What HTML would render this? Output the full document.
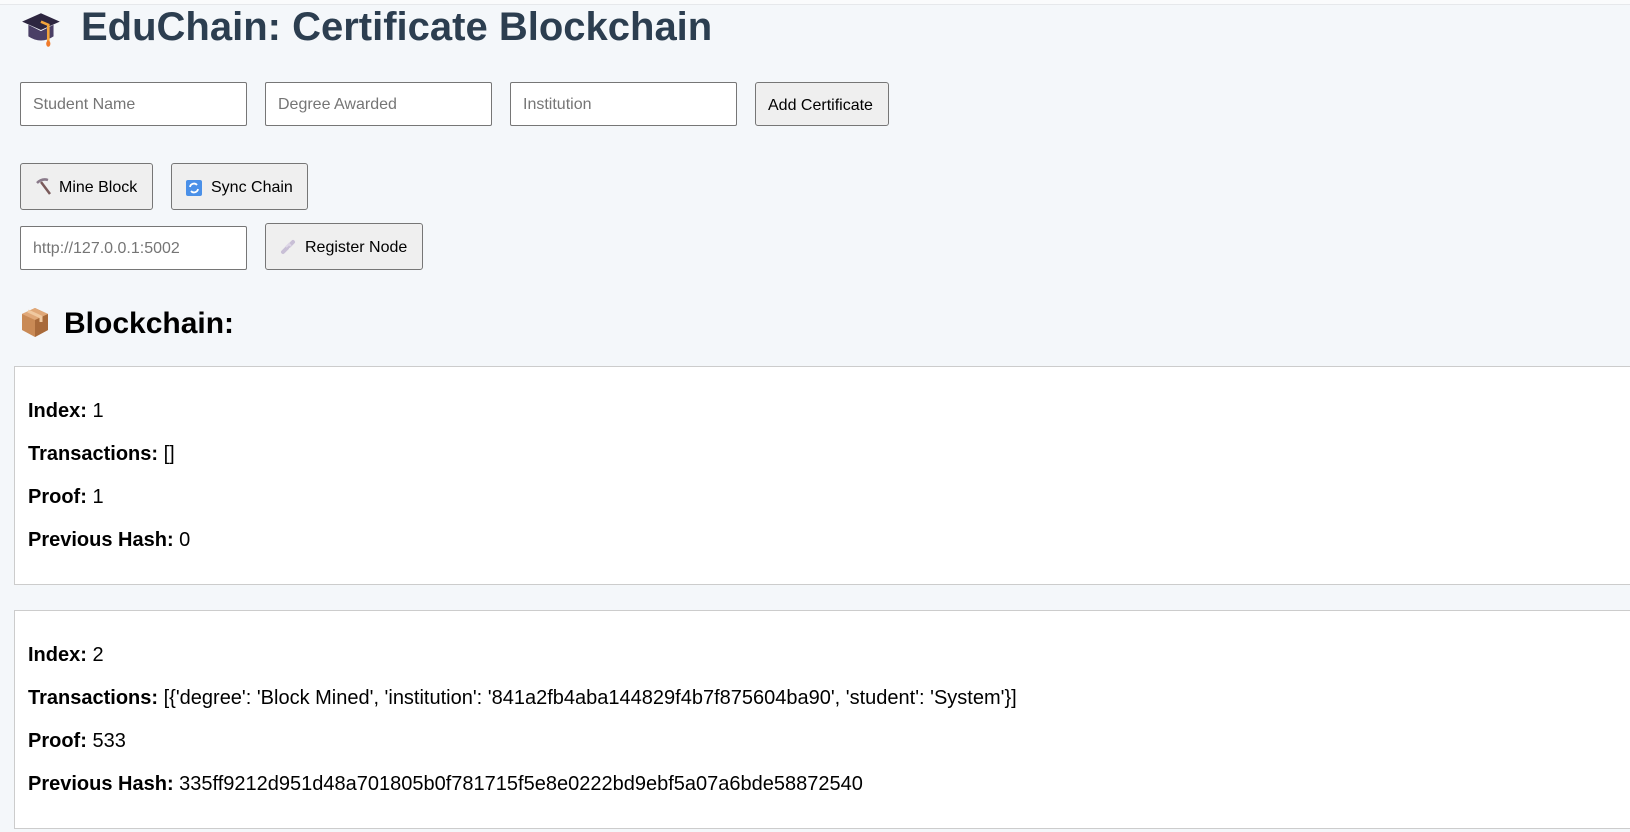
<!DOCTYPE html>
<html><head><meta charset="utf-8"><style>
*{box-sizing:border-box;margin:0;padding:0}
body{width:1630px;height:832px;overflow:hidden;background:#f4f7fa;font-family:"Liberation Sans",Arial,sans-serif;position:relative;color:#000}
.topline{position:absolute;left:0;top:0;width:1630px;height:5px;background:#fafbfc;border-bottom:1px solid #e6e8eb}
.abs{position:absolute}
h1{position:absolute;left:81px;top:4px;font-size:40px;font-weight:bold;color:#2c3e50;white-space:nowrap;line-height:46px}
.inp{position:absolute;height:44px;width:227px;background:#fff;border:1px solid #767676;border-radius:2px;font-size:16px;color:#757575;padding-left:12px;line-height:44px}
.btn{position:absolute;background:#efefef;border:1px solid #767676;border-radius:3px;font-size:16px;color:#000;line-height:48px;white-space:nowrap}
h2{position:absolute;left:64px;top:304px;font-size:30px;font-weight:bold;line-height:40px}
.blk{position:absolute;left:14px;width:1700px;height:219px;background:#fff;border:1px solid #ccc}
.blk p{position:absolute;left:13px;font-size:20px;line-height:24px;white-space:nowrap}
</style></head><body>
<div class="topline"></div>
<svg class="abs" style="left:20px;top:9px" width="44" height="40" viewBox="0 0 42 36">
<path d="M2 11 L20 3 L38 11 L20 19Z" fill="#2d2640"/>
<path d="M8 14 L8 25 Q20 33 32 25 L32 14 L20 20Z" fill="#4a3f66"/>
<path d="M20 11 L27 14 L27 30" stroke="#f2a33a" stroke-width="2.5" fill="none"/>
<ellipse cx="27" cy="32" rx="2" ry="3" fill="#f07a2a"/>
</svg>
<h1>EduChain: Certificate Blockchain</h1>
<div class="inp" style="left:20px;top:82px">Student Name</div>
<div class="inp" style="left:265px;top:82px">Degree Awarded</div>
<div class="inp" style="left:510px;top:82px">Institution</div>
<div class="btn" style="left:755px;top:82px;width:134px;height:44px;line-height:45px;padding-left:12px">Add Certificate</div>
<div class="btn" style="left:20px;top:163px;width:133px;height:47px;padding-left:38px">Mine Block</div>
<svg class="abs" style="left:34px;top:178px" width="18" height="18" viewBox="0 0 18 18"><path d="M3 5 Q8 0 14 2" stroke="#8a7a8a" stroke-width="2.5" fill="none"/><path d="M7 4 L16 16" stroke="#7a5a5a" stroke-width="2.5"/></svg>
<div class="btn" style="left:171px;top:163px;width:137px;height:47px;padding-left:39px">Sync Chain</div>
<svg class="abs" style="left:185px;top:179px" width="18" height="18" viewBox="0 0 18 18"><rect x="1" y="1" width="16" height="16" rx="2" fill="#4a90e8"/><path d="M5 8 A4 4 0 0 1 12 6 M13 10 A4 4 0 0 1 6 12" stroke="#fff" stroke-width="1.8" fill="none"/></svg>
<div class="inp" style="left:20px;top:226px;height:44px">http://127.0.0.1:5002</div>
<div class="btn" style="left:265px;top:223px;width:158px;height:47px;padding-left:39px">Register Node</div>
<svg class="abs" style="left:279px;top:238px" width="18" height="18" viewBox="0 0 18 18"><path d="M4 14 L8 10 M10 8 L14 4" stroke="#c8bfd6" stroke-width="4" stroke-linecap="round" fill="none"/><path d="M7 9 L10 6 L12 8" stroke="#ddd6e6" stroke-width="2" fill="none"/></svg>
<svg class="abs" style="left:20px;top:306px" width="30" height="32" viewBox="0 0 30 32"><path d="M2 8 L15 2 L28 8 L28 24 L15 31 L2 24Z" fill="#c98a55"/><path d="M2 8 L15 14 L28 8 L15 2Z" fill="#e0a878"/><path d="M15 14 L15 31 L28 24 L28 8Z" fill="#a86a3a"/><path d="M8 5 L21 11 L21 16" stroke="#f0c9a0" stroke-width="3" fill="none"/></svg>
<h2>Blockchain:</h2>
<div class="blk" style="top:366px">
<p style="top:32px"><b>Index:</b> 1</p>
<p style="top:75px"><b>Transactions:</b> []</p>
<p style="top:118px"><b>Proof:</b> 1</p>
<p style="top:161px"><b>Previous Hash:</b> 0</p>
</div>
<div class="blk" style="top:610px">
<p style="top:32px"><b>Index:</b> 2</p>
<p style="top:75px"><b>Transactions:</b> [{'degree': 'Block Mined', 'institution': '841a2fb4aba144829f4b7f875604ba90', 'student': 'System'}]</p>
<p style="top:118px"><b>Proof:</b> 533</p>
<p style="top:161px"><b>Previous Hash:</b> 335ff9212d951d48a701805b0f781715f5e8e0222bd9ebf5a07a6bde58872540</p>
</div>
</body></html>
